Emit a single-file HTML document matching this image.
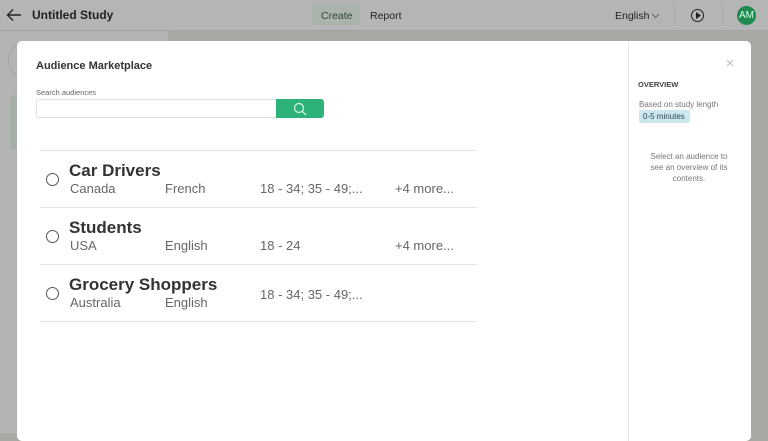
<!DOCTYPE html>
<html><head><style>
*{margin:0;padding:0;box-sizing:border-box}
body{width:768px;height:433px;overflow:hidden;position:relative;background:#a9a9a4;font-family:"Liberation Sans",sans-serif;color:#333}
.hdr{position:absolute;left:0;top:0;width:768px;height:31px;background:#b5b5b5;border-bottom:1px solid #a4a4a4}
.lp{position:absolute;left:0;top:31px;width:169px;height:402px;background:#b4b4b4;border-right:1px solid #a6a6a6}
.t{position:absolute;white-space:nowrap}
.modal{position:absolute;left:17px;top:41px;width:734px;height:400px;background:#fff;border-radius:5px}
.side{position:absolute;left:611px;top:0;width:1px;height:400px;background:#e8e8e8}
.row{position:absolute;left:23px;width:437px;height:57px;border-top:1px solid #e3e3e8}
.rad{position:absolute;left:6px;top:22px;width:13px;height:13px;border:1.4px solid #555;border-radius:50%}
.nm{position:absolute;left:29px;top:10px;font-size:17px;font-weight:bold;color:#333}
.s{position:absolute;top:30px;font-size:13px;color:#666}
</style></head><body>
<div class="hdr">
<svg style="position:absolute;left:6px;top:8px" width="16" height="14" viewBox="0 0 16 14"><path d="M15 7H2M7 1.5L1.5 7 7 12.5" stroke="#222" stroke-width="1.4" fill="none"/></svg>
<div class="t" style="left:32px;top:8px;font-size:12px;font-weight:bold;color:#222">Untitled Study</div>
<div style="position:absolute;left:312px;top:5px;width:48px;height:20px;background:#a9b3ab;border-radius:2px"></div>
<div class="t" style="left:321px;top:10px;font-size:10.5px;color:#2e4a38">Create</div>
<div class="t" style="left:370px;top:10px;font-size:10.5px;color:#222">Report</div>
<div class="t" style="left:615px;top:10px;font-size:10.5px;color:#222">English</div>
<svg style="position:absolute;left:651px;top:13px" width="9" height="6"><path d="M1 1l3.5 3.5L8 1" stroke="#666" fill="none"/></svg>
<div style="position:absolute;left:674px;top:6px;width:1px;height:19px;background:#a8a8a8"></div>
<div style="position:absolute;left:691px;top:9px;width:13px;height:13px;border:1.4px solid #222;border-radius:50%"></div>
<svg style="position:absolute;left:696px;top:12px" width="5" height="7"><path d="M0 0L5 3.5 0 7z" fill="#222"/></svg>
<div style="position:absolute;left:722px;top:6px;width:1px;height:19px;background:#a8a8a8"></div>
<div style="position:absolute;left:737px;top:6px;width:19px;height:19px;border-radius:50%;background:#1f8a50;color:#cfe;font-size:10px;text-align:center;line-height:19px">AM</div>
</div>
<div class="lp"></div>
<div style="position:absolute;left:8px;top:45px;width:20px;height:30px;border:1px solid #a3a3a3;border-radius:50%"></div>
<div style="position:absolute;left:10px;top:95px;width:10px;height:55px;background:#a5aea7;border-radius:4px"></div>
<div class="modal">
<div class="side"></div>
<div class="t" style="left:19px;top:19px;font-size:11px;font-weight:bold;color:#333">Audience Marketplace</div>
<div class="t" style="left:19px;top:47px;font-size:7.5px;color:#666">Search audiences</div>
<div style="position:absolute;left:19px;top:58px;width:241px;height:19px;border:1px solid #e2e2e2;border-radius:3px 0 0 3px"></div>
<div style="position:absolute;left:259px;top:58px;width:48px;height:19px;background:#2db27a;border-radius:0 3px 3px 0"></div>
<svg style="position:absolute;left:276px;top:61px" width="14" height="14"><circle cx="6" cy="6" r="4.5" stroke="#d9f5e8" stroke-width="1.2" fill="none"/><path d="M9.3 9.3L13 13" stroke="#d9f5e8" stroke-width="1.2"/></svg>
<div class="row" style="top:109px"><div class="rad"></div><div class="nm">Car Drivers</div><div class="s" style="left:30px">Canada</div><div class="s" style="left:125px">French</div><div class="s" style="left:220px">18 - 34; 35 - 49;...</div><div class="s" style="left:355px">+4 more...</div></div>
<div class="row" style="top:166px"><div class="rad"></div><div class="nm">Students</div><div class="s" style="left:30px">USA</div><div class="s" style="left:125px">English</div><div class="s" style="left:220px">18 - 24</div><div class="s" style="left:355px">+4 more...</div></div>
<div class="row" style="top:223px;border-bottom:1px solid #e3e3e8;height:58px"><div class="rad"></div><div class="nm">Grocery Shoppers</div><div class="s" style="left:30px">Australia</div><div class="s" style="left:125px">English</div><div class="s" style="left:220px;top:22px">18 - 34; 35 - 49;...</div></div>
<svg style="position:absolute;left:709px;top:18px" width="8" height="8"><path d="M1 1l6 6M7 1L1 7" stroke="#bbb"/></svg>
<div class="t" style="left:621px;top:39px;font-size:7.5px;font-weight:bold;color:#444">OVERVIEW</div>
<div class="t" style="left:622px;top:59px;font-size:8px;color:#777">Based on study length</div>
<div style="position:absolute;left:622px;top:69px;width:51px;height:13px;background:#cce8ee;border-radius:2px;font-size:8px;color:#345;line-height:13px;padding-left:4px">0-5 minutes</div>
<div class="t" style="left:626px;top:110px;width:92px;text-align:center;font-size:8px;color:#777;line-height:11px;white-space:normal">Select an audience to see an overview of its contents.</div>
</div>
</body></html>
